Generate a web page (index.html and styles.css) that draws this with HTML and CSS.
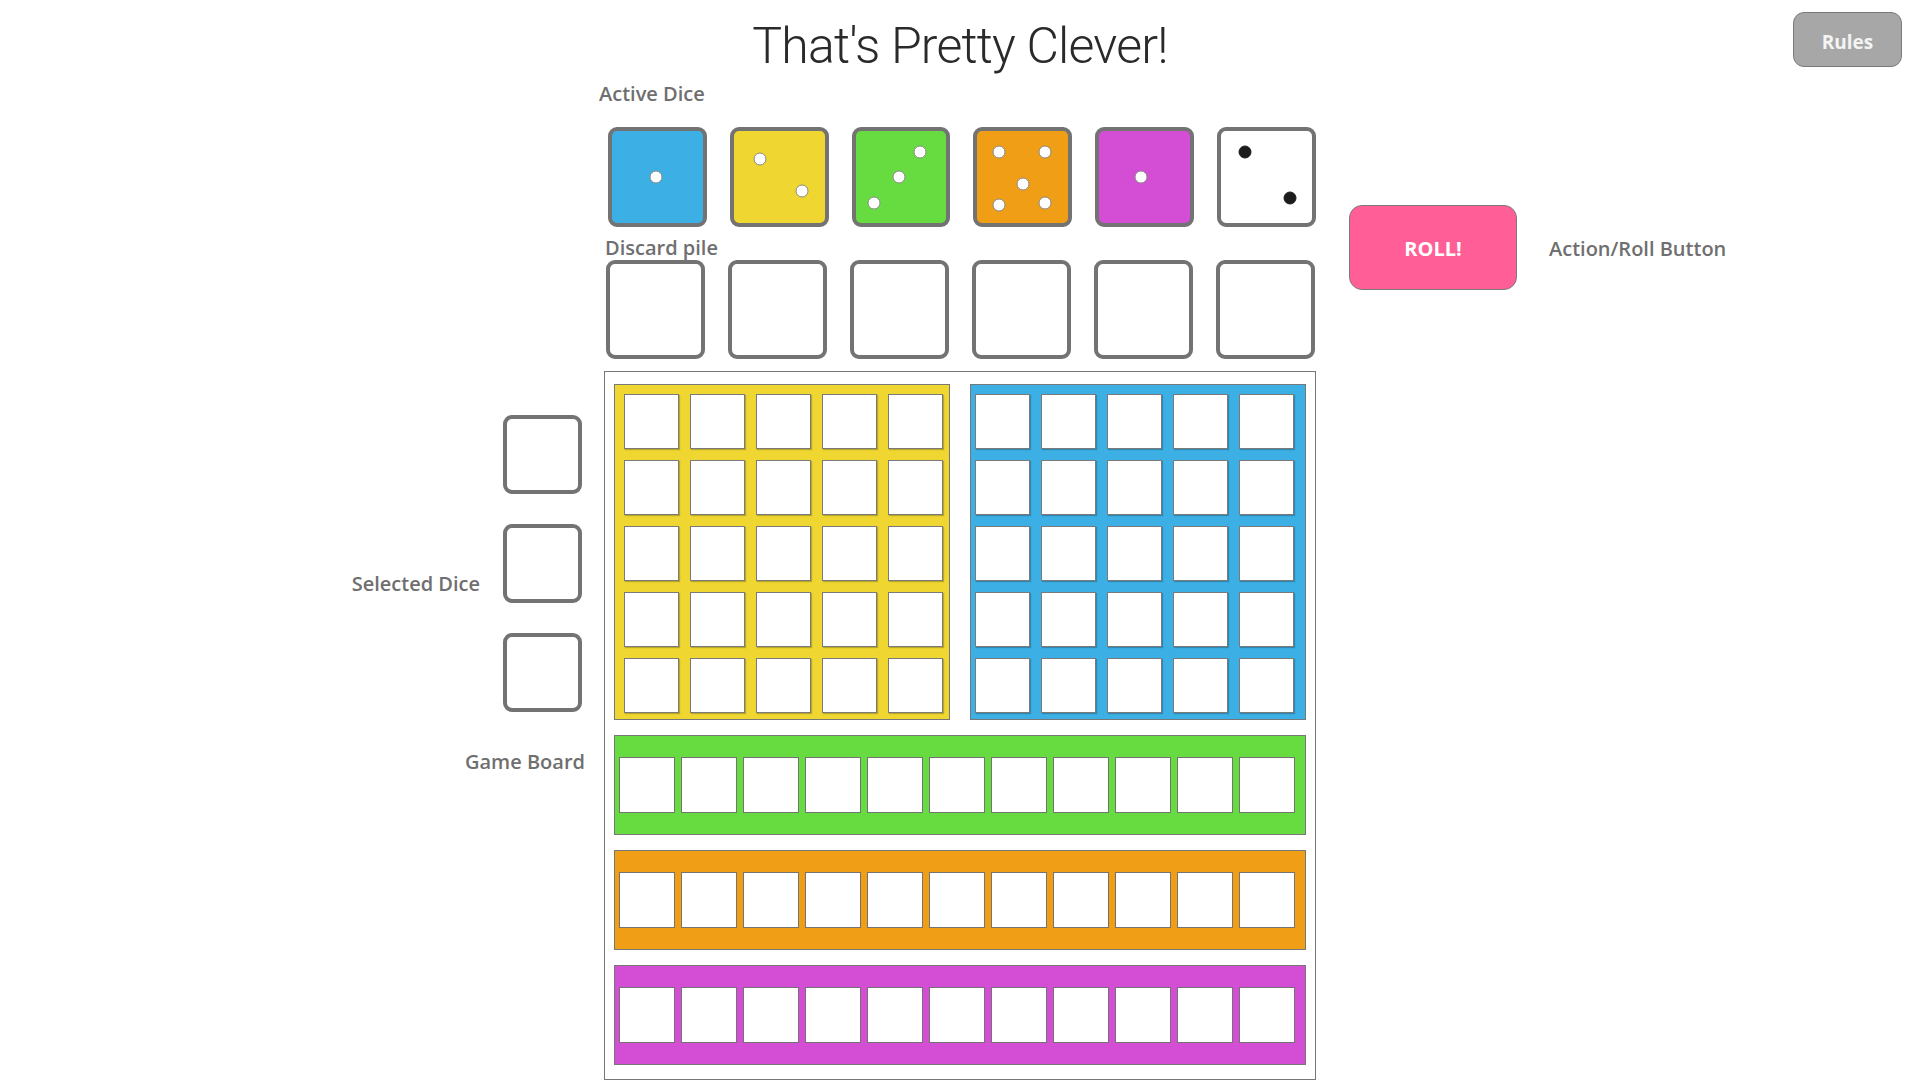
FILE: index.html
```html
<!DOCTYPE html>
<html lang="en">
<head>
<meta charset="utf-8">
<title>That's Pretty Clever!</title>
<link rel="stylesheet" href="styles.css">
</head>
<body>
<div class="topbar">
  <div></div>
  <h1 class="title">That's Pretty Clever!</h1>
  <div class="topbar-right"><button class="btn-rules">Rules</button></div>
</div>
<div class="layout">
  <div class="label label-active">Active Dice</div>
  <div class="dice-row">
    <div class="die die-blue"><span class="pip" style="left:44px;top:46px"></span></div>
    <div class="die die-yellow"><span class="pip" style="left:26px;top:28px"></span><span class="pip" style="left:68px;top:60px"></span></div>
    <div class="die die-green"><span class="pip" style="left:64px;top:21px"></span><span class="pip" style="left:43px;top:46px"></span><span class="pip" style="left:18px;top:72px"></span></div>
    <div class="die die-orange"><span class="pip" style="left:22px;top:21px"></span><span class="pip" style="left:68px;top:21px"></span><span class="pip" style="left:46px;top:53px"></span><span class="pip" style="left:22px;top:74px"></span><span class="pip" style="left:68px;top:72px"></span></div>
    <div class="die die-purple"><span class="pip" style="left:42px;top:46px"></span></div>
    <div class="die die-white"><span class="pip pip-dark" style="left:24px;top:21px"></span><span class="pip pip-dark" style="left:69px;top:67px"></span></div>
  </div>
  <div class="roll-area">
    <button class="btn-roll">ROLL!</button>
    <span class="label">Action/Roll Button</span>
  </div>
  <div class="label label-discard">Discard pile</div>
  <div class="discard-row">
    <div class="slot"></div><div class="slot"></div><div class="slot"></div><div class="slot"></div><div class="slot"></div><div class="slot"></div>
  </div>
  <div class="side">
    <div class="selected">
      <span class="label label-selected">Selected Dice</span>
      <div class="selected-slots">
        <div class="slot slot-small"></div>
        <div class="slot slot-small"></div>
        <div class="slot slot-small"></div>
      </div>
    </div>
    <div class="label label-board">Game Board</div>
  </div>
  <div class="board">
    <div class="board-top">
      <div class="area area-yellow">
        <div class="cell"></div><div class="cell"></div><div class="cell"></div><div class="cell"></div><div class="cell"></div>
        <div class="cell"></div><div class="cell"></div><div class="cell"></div><div class="cell"></div><div class="cell"></div>
        <div class="cell"></div><div class="cell"></div><div class="cell"></div><div class="cell"></div><div class="cell"></div>
        <div class="cell"></div><div class="cell"></div><div class="cell"></div><div class="cell"></div><div class="cell"></div>
        <div class="cell"></div><div class="cell"></div><div class="cell"></div><div class="cell"></div><div class="cell"></div>
      </div>
      <div class="area area-blue">
        <div class="cell"></div><div class="cell"></div><div class="cell"></div><div class="cell"></div><div class="cell"></div>
        <div class="cell"></div><div class="cell"></div><div class="cell"></div><div class="cell"></div><div class="cell"></div>
        <div class="cell"></div><div class="cell"></div><div class="cell"></div><div class="cell"></div><div class="cell"></div>
        <div class="cell"></div><div class="cell"></div><div class="cell"></div><div class="cell"></div><div class="cell"></div>
        <div class="cell"></div><div class="cell"></div><div class="cell"></div><div class="cell"></div><div class="cell"></div>
      </div>
    </div>
    <div class="track track-green">
      <div class="tcell"></div><div class="tcell"></div><div class="tcell"></div><div class="tcell"></div><div class="tcell"></div><div class="tcell"></div><div class="tcell"></div><div class="tcell"></div><div class="tcell"></div><div class="tcell"></div><div class="tcell"></div>
    </div>
    <div class="track track-orange">
      <div class="tcell"></div><div class="tcell"></div><div class="tcell"></div><div class="tcell"></div><div class="tcell"></div><div class="tcell"></div><div class="tcell"></div><div class="tcell"></div><div class="tcell"></div><div class="tcell"></div><div class="tcell"></div>
    </div>
    <div class="track track-purple">
      <div class="tcell"></div><div class="tcell"></div><div class="tcell"></div><div class="tcell"></div><div class="tcell"></div><div class="tcell"></div><div class="tcell"></div><div class="tcell"></div><div class="tcell"></div><div class="tcell"></div><div class="tcell"></div>
    </div>
  </div>
</div>
</body>
</html>
```
FILE: styles.css
```css
* { box-sizing: border-box; }
html, body { margin: 0; padding: 0; background: #ffffff; }
body {
  font-family: "Open Sans", "Liberation Sans", sans-serif;
  color: #6f6f6f;
  width: 1920px;
  height: 1080px;
  overflow: hidden;
}

.topbar {
  display: grid;
  grid-template-columns: 1fr auto 1fr;
  align-items: start;
}
.title {
  margin: 0;
  padding-top: 17px;
  font-family: Roboto, "Liberation Sans", sans-serif;
  font-weight: 300;
  font-size: 50px;
  line-height: 58px;
  letter-spacing: -0.8px;
  color: #2a2a2a;
  white-space: nowrap;
}
.topbar-right {
  display: flex;
  justify-content: flex-end;
  padding: 12px 18px 0 0;
}
.btn-rules {
  width: 109px;
  height: 55px;
  background: #a7a7a7;
  border: 1px solid #7a7a7a;
  border-radius: 11px;
  color: #f4f4f4;
  font-family: "Open Sans", "Liberation Sans", sans-serif;
  font-weight: 700;
  font-size: 19px;
  padding: 4px 0 0 0;
}

.layout {
  display: grid;
  grid-template-columns: 1fr 712px 1fr;
}
.label {
  font-size: 20px;
  font-weight: 600;
  line-height: 24px;
  color: #6f6f6f;
  white-space: nowrap;
}
.label-active {
  grid-column: 2;
  grid-row: 1;
  margin: 7px 0 21px -5px;
}
.dice-row {
  grid-column: 2;
  grid-row: 2;
  display: flex;
  gap: 23px;
  margin-left: 4px;
}
.die {
  position: relative;
  width: 99px;
  height: 100px;
  border: 4px solid #737373;
  border-radius: 9px;
}
.die-blue { background: #3cafe4; }
.die-yellow { background: #efd630; }
.die-green { background: #67dc41; }
.die-orange { background: #ef9e16; }
.die-purple { background: #d34ed5; }
.die-white { background: #ffffff; }
.pip {
  position: absolute;
  width: 13px;
  height: 13px;
  border-radius: 50%;
  background: #ffffff;
  border: 1px solid #8a8a8a;
  transform: translate(-50%, -50%);
}
.pip-dark { background: #1c1c1c; border-color: #1c1c1c; }

.roll-area {
  grid-column: 3;
  grid-row: 2 / span 3;
  align-self: start;
  display: flex;
  align-items: center;
  gap: 32px;
  margin: 78px 0 0 33px;
}
.btn-roll {
  width: 168px;
  height: 85px;
  background: #ff5f96;
  border: 1px solid #7a7a7a;
  border-radius: 13px;
  color: #ffffff;
  font-family: "Open Sans", "Liberation Sans", sans-serif;
  font-weight: 700;
  font-size: 20px;
  padding: 2px 0 0 0;
}
.roll-area .label { padding-top: 2px; }

.label-discard {
  grid-column: 2;
  grid-row: 3;
  margin: 9px 0 0 1px;
}
.discard-row {
  grid-column: 2;
  grid-row: 4;
  display: flex;
  gap: 23px;
  margin-left: 2px;
}
.slot {
  width: 99px;
  height: 99px;
  border: 4px solid #737373;
  border-radius: 9px;
  background: #ffffff;
}

.side {
  grid-column: 1;
  grid-row: 5;
  align-self: start;
  display: flex;
  flex-direction: column;
  align-items: flex-end;
  padding: 56px 22px 0 0;
}
.selected {
  display: flex;
  align-items: center;
  gap: 23px;
}
.label-selected { margin-top: 40px; }
.selected-slots {
  display: flex;
  flex-direction: column;
  gap: 30px;
}
.slot-small {
  width: 79px;
  height: 79px;
}
.label-board {
  margin: 38px -3px 0 0;
}

.board {
  grid-column: 2;
  grid-row: 5;
  margin-top: 12px;
  width: 712px;
  height: 709px;
  border: 1px solid #777777;
  padding: 12px 9px 13px 9px;
}
.board-top {
  display: flex;
  gap: 20px;
}
.area {
  display: grid;
  grid-template-columns: repeat(5, 55px);
  grid-auto-rows: 55px;
  gap: 11px;
  width: 336px;
  height: 336px;
  border: 1px solid #777777;
}
.area-yellow { background: #efd630; padding: 9px 6px 6px 9px; }
.area-blue { background: #3cafe4; padding: 9px 11px 6px 4px; }
.cell {
  background: #ffffff;
  border: 1px solid #7a7a7a;
  box-shadow: 1px 1px 1px rgba(0, 0, 0, 0.22);
}
.track {
  display: flex;
  gap: 6px;
  height: 100px;
  margin-top: 15px;
  border: 1px solid #777777;
  padding: 21px 10px 21px 4px;
}
.track-green { background: #67dc41; }
.track-orange { background: #ef9e16; }
.track-purple { background: #d34ed5; }
.tcell {
  width: 56px;
  height: 56px;
  background: #ffffff;
  border: 1px solid #737373;
}
```
